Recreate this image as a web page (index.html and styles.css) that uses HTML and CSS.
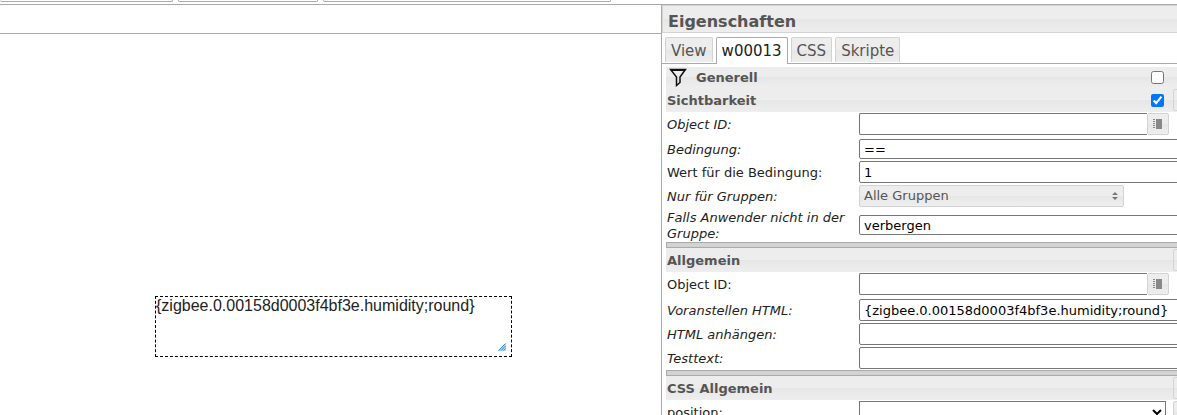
FILE: index.html
```html
<!DOCTYPE html>
<html lang="de">
<head>
    <meta charset="UTF-8">
    <meta name="viewport" content="width=device-width, initial-scale=1.0">
    <title>Eigenschaften</title>
    <link rel="stylesheet" href="styles.css">
</head>
<body>
    <div class="toolbar">
        <div class="toolbar-group group-views"></div>
        <div class="toolbar-group group-tools"></div>
        <div class="toolbar-group group-widgets"></div>
    </div>

    <div class="editor">
        <main class="workspace">
            <div class="view-tabs"></div>
            <div class="canvas">
                <div class="widget">
                    {zigbee.0.00158d0003f4bf3e.humidity;round}
                    <svg class="resize-handle" width="8" height="8" viewBox="0 0 8 8">
                        <path d="M0 8l8-8v8z" fill="#a9d3f2"/>
                        <path d="M0.5 7.5l7-7M3 7.5L7.5 3M5.5 7.5l2-2" stroke="#3a94dc" fill="none"/>
                    </svg>
                </div>
            </div>
        </main>

        <aside class="panel">
            <h1 class="panel-title">Eigenschaften</h1>
            <nav class="tabs">
                <a class="tab" href="#view">View</a>
                <a class="tab active" href="#widget">w00013</a>
                <a class="tab" href="#css">CSS</a>
                <a class="tab" href="#scripts">Skripte</a>
            </nav>

            <form class="props">
                <div class="group-head filter-head">
                    <h2 class="group-title">
                        <svg class="filter-icon" width="18" height="19" viewBox="0 0 18 19">
                            <path d="M1.5 1.5h15L11 9v5.5L7.5 17.5V9z" fill="none" stroke="#111" stroke-width="1.5"/>
                            <path d="M2 2.5h14" stroke="#111"/>
                        </svg>
                        <label for="generell">Generell</label>
                    </h2>
                    <input class="check" type="checkbox" id="generell">
                </div>

                <div class="group-head">
                    <h2 class="group-title"><label for="sichtbarkeit">Sichtbarkeit</label></h2>
                    <input class="check" type="checkbox" id="sichtbarkeit" checked>
                    <button class="icon-btn" type="button" aria-label="Sichtbarkeit"></button>
                </div>
                <div class="row id-row">
                    <label class="optional" for="visOid">Object ID:</label>
                    <div class="field id-field">
                        <input class="text" type="text" id="visOid">
                        <button class="icon-btn" type="button" aria-label="Object ID">
                            <svg width="10" height="10" viewBox="0 0 10 10">
                                <path d="M3 0h6v10H3z" fill="#888"/>
                                <path d="M1 0v10" stroke="#888" stroke-width="2" stroke-dasharray="1 1"/>
                            </svg>
                        </button>
                    </div>
                </div>
                <div class="row">
                    <label class="optional" for="visCond">Bedingung:</label>
                    <input class="text low" type="text" id="visCond" value="==">
                </div>
                <div class="row">
                    <label for="visVal">Wert für die Bedingung:</label>
                    <input class="text" type="text" id="visVal" value="1">
                </div>
                <div class="row">
                    <label class="optional" for="visGroups">Nur für Gruppen:</label>
                    <div class="field groups-field">
                        <select class="groups" id="visGroups">
                            <option>Alle Gruppen</option>
                        </select>
                        <svg class="updown" width="6" height="8" viewBox="0 0 6 8">
                            <path d="M3 0l3 3H0zM3 8L0 5h6z" fill="#777"/>
                        </svg>
                    </div>
                </div>
                <div class="row">
                    <label class="optional" for="visAction">Falls Anwender nicht in der Gruppe:</label>
                    <input class="text low" type="text" id="visAction" value="verbergen">
                </div>

                <div class="divider"></div>
                <div class="group-head">
                    <h2 class="group-title">Allgemein</h2>
                    <button class="icon-btn" type="button" aria-label="Allgemein"></button>
                </div>
                <div class="row id-row">
                    <label for="oid">Object ID:</label>
                    <div class="field id-field">
                        <input class="text" type="text" id="oid">
                        <button class="icon-btn" type="button" aria-label="Object ID">
                            <svg width="10" height="10" viewBox="0 0 10 10">
                                <path d="M3 0h6v10H3z" fill="#888"/>
                                <path d="M1 0v10" stroke="#888" stroke-width="2" stroke-dasharray="1 1"/>
                            </svg>
                        </button>
                    </div>
                </div>
                <div class="row">
                    <label class="optional" for="htmlPrepend">Voranstellen HTML:</label>
                    <input class="text" type="text" id="htmlPrepend" value="{zigbee.0.00158d0003f4bf3e.humidity;round}">
                </div>
                <div class="row">
                    <label class="optional" for="htmlAppend">HTML anhängen:</label>
                    <input class="text" type="text" id="htmlAppend">
                </div>
                <div class="row">
                    <label class="optional" for="testText">Testtext:</label>
                    <input class="text" type="text" id="testText">
                </div>

                <div class="divider"></div>
                <div class="group-head">
                    <h2 class="group-title">CSS Allgemein</h2>
                    <button class="icon-btn" type="button" aria-label="CSS Allgemein"></button>
                </div>
                <div class="row">
                    <label for="position">position:</label>
                    <select class="position" id="position">
                        <option></option>
                        <option>relative</option>
                        <option>absolute</option>
                    </select>
                    <button class="icon-btn" type="button" aria-label="position"></button>
                </div>
            </form>
        </aside>
    </div>
</body>
</html>
```
FILE: styles.css
```css
* {
    box-sizing: border-box;
}
body {
    margin: 0;
    height: 100vh;
    display: flex;
    flex-direction: column;
    overflow: hidden;
    background: #fff;
    color: #222;
    font-family: "DejaVu Sans", Verdana, sans-serif;
    font-size: 13px;
    line-height: 16px;
}
.toolbar {
    display: flex;
    gap: 5px;
    height: 5px;
    padding-bottom: 2px;
    border-bottom: 1px solid #aaa;
}
.toolbar-group {
    border: 1px solid #aaa;
    border-top: none;
    border-radius: 0 0 3px 3px;
}
.group-views {
    width: 173px;
    border-left: none;
}
.group-tools {
    width: 140px;
}
.group-widgets {
    width: 288px;
}
.editor {
    flex: 1;
    min-height: 0;
    display: flex;
}
.workspace {
    flex: 1;
    min-width: 0;
    display: flex;
    flex-direction: column;
}
.view-tabs {
    height: 29px;
    border-bottom: 1px solid #aaa;
}
.canvas {
    position: relative;
    flex: 1;
}
.widget {
    position: absolute;
    left: 155px;
    top: 262px;
    width: 357px;
    height: 61px;
    border: 1px dashed #000;
    font-family: "Liberation Sans", Arial, sans-serif;
    font-size: 16px;
    line-height: 18px;
}
.resize-handle {
    position: absolute;
    right: 5px;
    bottom: 5px;
}
.panel {
    width: 516px;
    overflow: hidden;
    border-left: 1px solid #aaa;
}
.panel-title {
    margin: 0;
    height: 28px;
    padding: 0 5px;
    border: 1px solid #d3d3d3;
    border-right: none;
    background: linear-gradient(#ededed 50%, #e6e6e6 50%, #eee);
    color: #555;
    font-size: 16px;
    line-height: 31px;
}
.tabs {
    display: flex;
    gap: 3px;
    height: 31px;
    padding: 4px 3px 0;
    border-bottom: 1px solid #aaa;
}
.tab {
    height: 25px;
    padding: 0 5px;
    border: 1px solid #d3d3d3;
    border-bottom: none;
    border-radius: 2px 2px 0 0;
    background: linear-gradient(#ededed 50%, #e6e6e6 50%, #eee);
    color: #555;
    font-size: 15px;
    line-height: 26px;
    text-decoration: none;
}
.tab.active {
    height: 27px;
    border-color: #aaa;
    background: #fff;
    color: #212121;
}
/* the table is wider than the panel, the last column is cut off */
.props {
    margin: 3px -22px 0 4px;
}
.group-head,
.row {
    display: grid;
    grid-template-columns: 193px 1fr 26px;
    align-items: center;
}
.group-head {
    height: 24px;
    background: linear-gradient(#ededed 50%, #e6e6e6 50%, #eee);
    color: #555;
}
.filter-head {
    height: 21px;
}
.group-title {
    display: flex;
    align-items: center;
    gap: 9px;
    margin: 0;
    padding: 2px 0 0 1px;
    font-size: 13px;
}
.filter-head .group-title {
    padding-top: 0;
}
.filter-icon {
    margin-left: 2px;
}
.check {
    grid-column: 2;
    justify-self: end;
    width: 13px;
    height: 13px;
    margin: 0 9px 0 0;
    accent-color: #0075ff;
}
.row > label {
    padding: 2px 10px 0 1px;
}
.row > :not(label) {
    margin-top: 1px;
    margin-bottom: 1px;
}
.row .optional {
    font-style: italic;
}
.id-row {
    padding-bottom: 2px;
}
.text {
    grid-column: 2 / -1;
    min-width: 0;
    height: 22px;
    padding: 1px 4px;
    border: 1px solid #767676;
    border-radius: 2px;
    background: #fff;
    color: #000;
    font: inherit;
}
.text.low {
    height: 20px;
}
.id-field {
    display: flex;
    margin-right: 4px;
}
.id-field .text {
    flex: 1;
    border-right: none;
    border-radius: 2px 0 0 2px;
}
.icon-btn {
    grid-column: 3;
    display: flex;
    align-items: center;
    justify-content: center;
    width: 22px;
    height: 22px;
    padding: 0;
    border: 1px solid #d3d3d3;
    border-radius: 2px;
    background: linear-gradient(#ededed 50%, #e6e6e6 50%, #eee);
}
.groups-field {
    position: relative;
    width: 265px;
}
.groups {
    display: block;
    width: 100%;
    height: 22px;
    padding: 0 4px;
    appearance: none;
    border: 1px solid #d3d3d3;
    border-radius: 2px;
    background: linear-gradient(#ededed 50%, #e6e6e6 50%, #eee);
    color: #555;
    font: inherit;
}
.updown {
    position: absolute;
    right: 6px;
    top: 7px;
    pointer-events: none;
}
.position {
    height: 22px;
    margin-right: 7px;
    border: 1px solid #767676;
    border-radius: 0;
    background: #fff;
    font: inherit;
}
.divider {
    height: 6px;
    border: 1px solid #aaa;
    background: #d3d3d3;
}
```
